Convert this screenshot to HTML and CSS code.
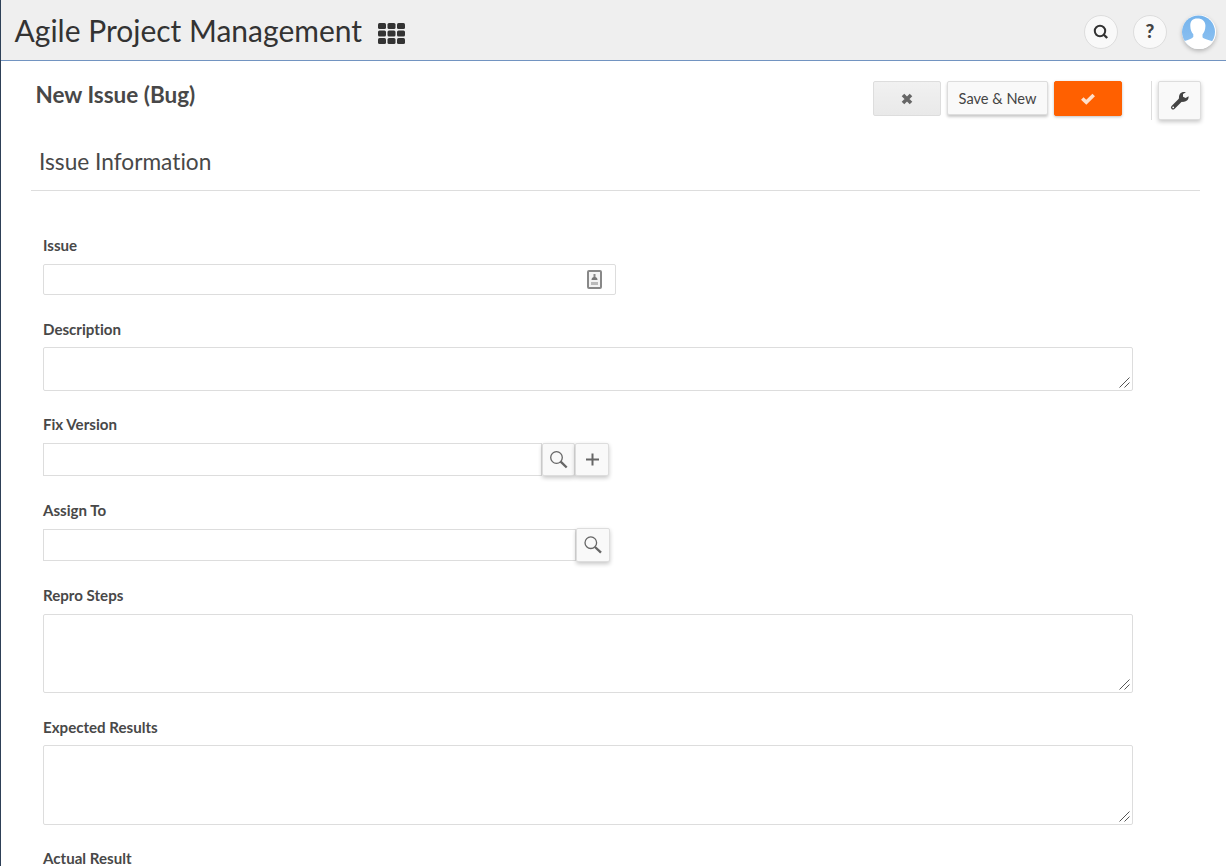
FILE: index.html
```html
<!DOCTYPE html>
<html lang="en">
<head>
<meta charset="utf-8">
<title>New Issue (Bug)</title>
<link rel="stylesheet" href="styles.css">
</head>
<body>
<div class="app">
  <header class="topbar">
    <h1 class="app-title">Agile Project Management</h1>
    <svg class="grid-icon" width="27" height="21" viewBox="0 0 27 21" fill="#333">
      <rect x="0" y="0" width="8" height="6" rx="1.500"/><rect x="9.5" y="0" width="8" height="6" rx="1.500"/><rect x="19" y="0" width="8" height="6" rx="1.500"/>
      <rect x="0" y="7.5" width="8" height="6" rx="1.500"/><rect x="9.5" y="7.5" width="8" height="6" rx="1.500"/><rect x="19" y="7.5" width="8" height="6" rx="1.500"/>
      <rect x="0" y="15" width="8" height="6" rx="1.500"/><rect x="9.5" y="15" width="8" height="6" rx="1.500"/><rect x="19" y="15" width="8" height="6" rx="1.500"/>
    </svg>
    <nav class="top-actions">
      <button class="round" aria-label="Search"><svg width="16" height="16" viewBox="0 0 16 16" fill="none" stroke="#333" stroke-width="2"><circle cx="7" cy="7" r="5.200"/><path d="M10.600 10.500L14.200 14" stroke-width="2.400"/></svg></button>
      <button class="round help" aria-label="Help">?</button>
      <button class="avatar" aria-label="Account"><svg width="34" height="34" viewBox="0 0 34 34"><defs><linearGradient id="sky" x2="0" y2="1"><stop offset="0" stop-color="#74b3ec"/><stop offset="1" stop-color="#8fc2f1"/></linearGradient></defs><circle cx="17" cy="17" r="17" fill="#fff"/><circle cx="16.500" cy="17" r="16.500" fill="url(#sky)"/><path d="M15.300 3.500c5.200 0 8.300 2.800 8.100 7.600c-.1 4-1.200 6.400-2.900 8.400v2.700c1.500 2 6.700 2.700 10.600 4.400A17 17 0 0 1 2.600 26.100c3.300-1.500 7.300-2.200 8.700-4.200v-2.600c-1.800-2-2.900-4.200-3-8.200c-.2-4.800 2.200-7.600 7-7.600z" fill="#fff"/></svg></button>
    </nav>
  </header>
  <div class="page-head">
    <h2 class="page-title">New Issue (Bug)</h2>
    <div class="buttons">
      <button class="btn cancel" aria-label="Cancel"><svg width="12" height="12" viewBox="0 0 12 12" stroke="#666" stroke-width="3.600"><path d="M2 2L10 10M10 2L2 10"/></svg></button>
      <button class="btn save-new">Save &amp; New</button>
      <button class="btn save" aria-label="Save"><svg width="14" height="12" viewBox="0 0 14 12" fill="none" stroke="#ffe0cc" stroke-width="3.600"><path d="M1.300 5.500L5.300 9.300L12.700 2"/></svg></button>
      <span class="divider"></span>
      <button class="btn tools" aria-label="Tools"><svg width="20" height="20" viewBox="0 0 20 20"><path d="M3 16.500L10.500 9" stroke="#444" stroke-width="4" stroke-linecap="round"/><path d="M18.600 5.300L15.600 7.100L13 5.700V3L15.900 1.200C12.600 .1 9 2.100 9 6L8.800 8.300L11.300 10.800C15 11.500 19 9.500 18.600 5.300Z" fill="#444"/><circle cx="3.200" cy="16.300" r=".9" fill="#fff"/></svg></button>
    </div>
  </div>
  <h3 class="section-title">Issue Information</h3>
  <form class="form">
    <div class="field"><label>Issue</label>
      <div class="box issue"><svg class="card-icon" width="17" height="21" viewBox="-1 -1 17 21"><rect x="1" y="1" width="13" height="17" rx="1" fill="#f4f4f4" stroke="#888" stroke-width="2"/><path d="M7.500 4v4" stroke="#888" stroke-width="2"/><path d="M4.500 10c0-2 1-3 3-3s3 1 3 3z" fill="#777"/><path d="M4 13.500h7" stroke="#bbb" stroke-width="3"/></svg></div></div>
    <div class="field tight"><label>Description</label><div class="area short"><textarea></textarea><svg class="grip" width="11" height="11" viewBox="0 0 11 11" stroke="#555"><path d="M.5 10.500L10.500 .5M5.500 10.500L10.500 5.500"/></svg></div></div>
    <div class="field pull"><label>Fix Version</label>
      <div class="lookup version"><div class="box"></div>
        <button type="button" class="tool" aria-label="Find version"><svg width="20" height="20" viewBox="0 0 20 20" fill="none" stroke="#666"><circle cx="7.500" cy="7.500" r="5.800" stroke-width="1.300"/><path d="M11.700 11.700L17.700 17.500" stroke-width="2.400"/></svg></button>
        <button type="button" class="tool" aria-label="Add version"><svg width="20" height="20" viewBox="0 0 20 20" stroke="#666" stroke-width="2"><path d="M10.500 3.500v12M4 9.500h13"/></svg></button></div></div>
    <div class="field"><label>Assign To</label>
      <div class="lookup assign"><div class="box"></div>
        <button type="button" class="tool" aria-label="Find person"><svg width="20" height="20" viewBox="0 0 20 20" fill="none" stroke="#666"><circle cx="7.800" cy="7.700" r="5.800" stroke-width="1.300"/><path d="M12 12L18 17.700" stroke-width="2.400"/></svg></button></div></div>
    <div class="field"><label>Repro Steps</label><div class="area repro"><textarea></textarea><svg class="grip" width="11" height="11" viewBox="0 0 11 11" stroke="#555"><path d="M.5 10.500L10.500 .5M5.500 10.500L10.500 5.500"/></svg></div></div>
    <div class="field tight"><label>Expected Results</label><div class="area expected"><textarea></textarea><svg class="grip" width="11" height="11" viewBox="0 0 11 11" stroke="#555"><path d="M.5 10.500L10.500 .5M5.500 10.500L10.500 5.500"/></svg></div></div>
    <div class="field pull"><label>Actual Result</label><div class="area expected"><textarea></textarea></div></div>
  </form>
</div>
</body>
</html>
```
FILE: styles.css
```css
* { box-sizing: border-box; }
body { margin: 0; font-family: Lato, sans-serif; font-variant-ligatures: none; color: #484848; background: #fff; }
h1, h2, h3 { margin: 0; }
button { font-family: inherit; padding: 0; color: #444; display: flex; align-items: center; justify-content: center; }
svg { display: block; flex: none; }
.app { height: 866px; overflow: hidden; border-left: 1px solid #2e4057; }
.topbar { height: 61px; background: #efefef; border-bottom: 1px solid #7294c1; display: flex; align-items: center; padding: 0 10px 0 13.5px; }
.app-title { font-size: 30px; line-height: 40px; font-weight: 400; color: #333; white-space: nowrap; width: 363.5px; }
.grid-icon { margin-top: 7px; }
.top-actions { margin-left: auto; display: flex; gap: 15px; padding-top: 3px; }
.round { width: 34px; height: 34px; border-radius: 50%; border: 1px solid #ddd; background: #f9f9f9; }
.help { font-size: 19px; font-weight: 900; padding-bottom: 2px; }
.avatar { width: 34px; height: 34px; border: 0; border-radius: 50%; background: none; box-shadow: 0 2px 4px rgba(0,0,0,.25); }
.page-head { height: 77px; display: flex; justify-content: space-between; padding: 20px 25px 0 34.5px; }
.page-title { font-size: 22.5px; line-height: 28px; font-weight: 700; }
.buttons { display: flex; align-items: flex-start; }
.btn { height: 35px; border: 1px solid #ddd; border-radius: 2px; background: #f9f9f9; }
.cancel { width: 68px; background: linear-gradient(#f1f1f1, #e9e9e9); margin-right: 6px; }
.save-new { width: 101px; height: 34px; font-size: 14.6px; margin-right: 6px; box-shadow: 0 2px 3px rgba(0,0,0,.22); }
.save { width: 68px; background: #ff6000; border-color: #ff6000; box-shadow: 0 1px 3px rgba(0,0,0,.25); }
.divider { width: 1px; height: 39px; background: #ddd; margin: 0 6px 0 29px; }
.tools { width: 43px; height: 39px; box-shadow: 0 2px 4px rgba(0,0,0,.22); }
.section-title { height: 53px; margin: 0 26px 0 30px; padding: 10px 8px 0; border-bottom: 1px solid #ddd; font-size: 22.7px; line-height: 28px; font-weight: 400; }
.form { padding: 44px 0 0 42px; }
.field { margin-bottom: 24px; display: flex; flex-direction: column; gap: 9px; }
.tight { gap: 8px; }
.pull { margin-top: -1px; }
label { height: 20px; font-size: 15.1px; line-height: 21px; font-weight: 700; }
.box { border: 1px solid #ddd; background: #fff; }
.issue { width: 573px; height: 31px; border-radius: 2px; display: flex; align-items: center; justify-content: flex-end; padding-right: 12.5px; }
.card-icon { filter: blur(.5px); }
.area { position: relative; width: 1090px; border: 1px solid #ddd; border-radius: 2px; }
.area textarea { display: block; width: 100%; height: 100%; margin: 0; border: 0; outline: 0; background: none; resize: none; }
.grip { position: absolute; right: 2px; bottom: 2px; }
.short { height: 44px; }
.repro { height: 79px; }
.expected { height: 80px; }
.lookup { display: flex; align-items: center; }
.version { height: 33px; }
.version .box { width: 499px; height: 33px; }
.assign { height: 32px; }
.assign .box { width: 533px; height: 32px; }
.tool { flex: none; width: 34px; height: 34px; border: 1px solid #ddd; border-radius: 2px; background: #f9f9f9; box-shadow: 0 2px 4px rgba(0,0,0,.22); }
.version .tool { height: 33px; }
.version .tool:nth-child(2) { width: 33px; }
```
